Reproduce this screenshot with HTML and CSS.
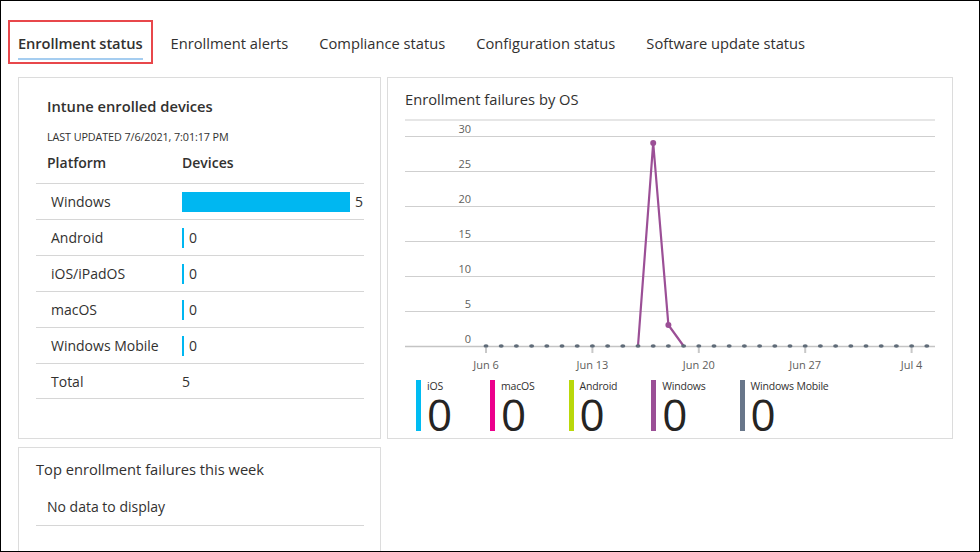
FILE: index.html
```html
<!DOCTYPE html>
<html>
<head>
<meta charset="utf-8">
<link rel="stylesheet" href="styles.css">
</head>
<body>
<div class="frame">
  <nav class="tabs">
    <div class="tab-highlight"><span class="tab active">Enrollment status</span></div>
    <span class="tab">Enrollment alerts</span>
    <span class="tab">Compliance status</span>
    <span class="tab">Configuration status</span>
    <span class="tab">Software update status</span>
  </nav>
  <div class="content">
    <div class="left-col">
      <section class="card devices-card">
        <h2 class="card-title">Intune enrolled devices</h2>
        <div class="updated">LAST UPDATED 7/6/2021, 7:01:17 PM</div>
        <div class="dev-table">
          <div class="dev-head"><span>Platform</span><span>Devices</span></div>
          <div class="dev-row"><span>Windows</span><span class="val"><i class="bar" style="width:168px"></i>5</span></div>
          <div class="dev-row"><span>Android</span><span class="val"><i class="bar zero"></i>0</span></div>
          <div class="dev-row"><span>iOS/iPadOS</span><span class="val"><i class="bar zero"></i>0</span></div>
          <div class="dev-row"><span>macOS</span><span class="val"><i class="bar zero"></i>0</span></div>
          <div class="dev-row"><span>Windows Mobile</span><span class="val"><i class="bar zero"></i>0</span></div>
          <div class="dev-row"><span>Total</span><span class="val">5</span></div>
        </div>
      </section>
      <section class="card failures-card">
        <h2 class="card-title light">Top enrollment failures this week</h2>
        <div class="nodata">No data to display</div>
      </section>
    </div>
    <section class="card chart-card">
      <h2 class="card-title light chart-title">Enrollment failures by OS</h2>
      <svg class="chart" width="530" height="260" viewBox="0 0 530 260">
        <line x1="0" y1="5" x2="530" y2="5" stroke="#e6e6e6" stroke-width="2"/>
        <g stroke="#cfcfcf" stroke-width="1">
          <line x1="0" y1="21.5" x2="530" y2="21.5"/>
          <line x1="0" y1="56.5" x2="530" y2="56.5"/>
          <line x1="0" y1="91.5" x2="530" y2="91.5"/>
          <line x1="0" y1="126.5" x2="530" y2="126.5"/>
          <line x1="0" y1="161.5" x2="530" y2="161.5"/>
          <line x1="0" y1="196.5" x2="530" y2="196.5"/>
          <line x1="0" y1="231.5" x2="530" y2="231.5" stroke="#c4c4c4" stroke-width="1.5"/>
        </g>
        <g class="ylab" text-anchor="end">
          <text x="66" y="18">30</text>
          <text x="66" y="53">25</text>
          <text x="66" y="88">20</text>
          <text x="66" y="123">15</text>
          <text x="66" y="158">10</text>
          <text x="66" y="193">5</text>
          <text x="66" y="228">0</text>
        </g>
        <g stroke="#c8c8c8" stroke-width="2">
          <line x1="81" y1="233" x2="81" y2="238"/>
          <line x1="187.4" y1="233" x2="187.4" y2="238"/>
          <line x1="293.8" y1="233" x2="293.8" y2="238"/>
          <line x1="400.2" y1="233" x2="400.2" y2="238"/>
          <line x1="506.6" y1="233" x2="506.6" y2="238"/>
        </g>
        <g class="xlab" text-anchor="middle">
          <text x="81" y="254">Jun 6</text>
          <text x="187.4" y="254">Jun 13</text>
          <text x="293.8" y="254">Jun 20</text>
          <text x="400.2" y="254">Jun 27</text>
          <text x="506.6" y="254">Jul 4</text>
        </g>
        <polyline points="233,231 248.2,28 263.4,210 278.6,231" fill="none" stroke="#9b4f96" stroke-width="2.2" stroke-linejoin="round"/>
        <circle cx="248.2" cy="28" r="3" fill="#9b4f96"/>
        <circle cx="263.4" cy="210" r="3" fill="#9b4f96"/>
        <g fill="#5f6b78">
          <ellipse cx="81" cy="231" rx="2.5" ry="1.8"/><ellipse cx="96.2" cy="231" rx="2.5" ry="1.8"/><ellipse cx="111.4" cy="231" rx="2.5" ry="1.8"/><ellipse cx="126.6" cy="231" rx="2.5" ry="1.8"/><ellipse cx="141.8" cy="231" rx="2.5" ry="1.8"/><ellipse cx="157" cy="231" rx="2.5" ry="1.8"/><ellipse cx="172.2" cy="231" rx="2.5" ry="1.8"/><ellipse cx="187.4" cy="231" rx="2.5" ry="1.8"/><ellipse cx="202.6" cy="231" rx="2.5" ry="1.8"/><ellipse cx="217.8" cy="231" rx="2.5" ry="1.8"/><ellipse cx="233" cy="231" rx="2.5" ry="1.8"/><ellipse cx="248.2" cy="231" rx="2.5" ry="1.8"/><ellipse cx="263.4" cy="231" rx="2.5" ry="1.8"/><ellipse cx="278.6" cy="231" rx="2.5" ry="1.8"/><ellipse cx="293.8" cy="231" rx="2.5" ry="1.8"/><ellipse cx="309" cy="231" rx="2.5" ry="1.8"/><ellipse cx="324.2" cy="231" rx="2.5" ry="1.8"/><ellipse cx="339.4" cy="231" rx="2.5" ry="1.8"/><ellipse cx="354.6" cy="231" rx="2.5" ry="1.8"/><ellipse cx="369.8" cy="231" rx="2.5" ry="1.8"/><ellipse cx="385" cy="231" rx="2.5" ry="1.8"/><ellipse cx="400.2" cy="231" rx="2.5" ry="1.8"/><ellipse cx="415.4" cy="231" rx="2.5" ry="1.8"/><ellipse cx="430.6" cy="231" rx="2.5" ry="1.8"/><ellipse cx="445.8" cy="231" rx="2.5" ry="1.8"/><ellipse cx="461" cy="231" rx="2.5" ry="1.8"/><ellipse cx="476.2" cy="231" rx="2.5" ry="1.8"/><ellipse cx="491.4" cy="231" rx="2.5" ry="1.8"/><ellipse cx="506.6" cy="231" rx="2.5" ry="1.8"/><ellipse cx="521.8" cy="231" rx="2.5" ry="1.8"/>
        </g>
      </svg>
      <div class="legend">
        <div class="lg lg-ios"><span class="lg-label">iOS</span><span class="lg-num">0</span></div>
        <div class="lg lg-mac"><span class="lg-label">macOS</span><span class="lg-num">0</span></div>
        <div class="lg lg-android"><span class="lg-label">Android</span><span class="lg-num">0</span></div>
        <div class="lg lg-win"><span class="lg-label">Windows</span><span class="lg-num">0</span></div>
        <div class="lg lg-wm"><span class="lg-label">Windows Mobile</span><span class="lg-num">0</span></div>
      </div>
    </section>
  </div>
</div>
</body>
</html>
```
FILE: styles.css
```css
* { box-sizing: border-box; }
html, body { margin: 0; padding: 0; background: #fff; }
body {
  font-family: "Open Sans", "Noto Sans", sans-serif;
  color: #323130;
}
.frame {
  width: 980px;
  height: 552px;
  border: 1px solid #000;
  overflow: hidden;
}
.tabs {
  display: flex;
  align-items: flex-start;
  margin: 19px 0 0 7px;
  height: 44px;
  font-size: 14.7px;
}
.tab-highlight {
  border: 2px solid #e8474b;
  height: 44px;
  padding: 0 8px;
  margin-right: 18px;
}
.tab {
  display: inline-block;
  margin-top: 13px;
  margin-right: 31px;
  white-space: nowrap;
  line-height: 20px;
}
.tab.active {
  margin-top: 11px;
  margin-right: 0;
  font-weight: 600;
  letter-spacing: -0.1px;
  padding-bottom: 5px;
  border-bottom: 2px solid #a5cdf0;
}
.content {
  display: flex;
  gap: 6px;
  margin: 13px 0 0 17px;
  align-items: flex-start;
}
.left-col {
  display: flex;
  flex-direction: column;
  gap: 8px;
  width: 363px;
}
.card {
  border: 1px solid #dcdcdc;
  background: #fff;
}
.card-title {
  margin: 0;
  font-size: 14.7px;
  font-weight: 600;
  line-height: 20px;
}
.card-title.light { font-weight: 400; }
.devices-card {
  height: 362px;
  padding: 18px 16px 0 17px;
}
.devices-card .card-title { padding-left: 11px; }
.updated {
  font-size: 10.8px;
  padding-left: 11px;
  margin-top: 14px;
  line-height: 13px;
  letter-spacing: -0.1px;
}
.dev-table { margin-top: 10px; font-size: 14px; }
.dev-head {
  display: grid;
  grid-template-columns: 135px 1fr;
  padding-left: 11px;
  height: 31px;
  font-weight: 600;
  line-height: 20px;
  border-bottom: 1px solid #d6d6d6;
}
.dev-row {
  display: grid;
  grid-template-columns: 131px 1fr;
  padding-left: 15px;
  height: 36px;
  align-items: center;
  border-bottom: 1px solid #d6d6d6;
}
.dev-row:last-child { height: 35px; }
.val { display: flex; align-items: center; }
.bar {
  display: inline-block;
  height: 20px;
  background: #00b7f1;
  margin-right: 5px;
}
.bar.zero { width: 2px; margin-right: 5px; }
.failures-card {
  height: 120px;
  padding: 11px 16px 0 17px;
}
.nodata {
  font-size: 14px;
  margin-top: 18px;
  padding-left: 11px;
  padding-bottom: 8px;
  line-height: 20px;
  border-bottom: 1px solid #d6d6d6;
}
.chart-card {
  width: 566px;
  height: 362px;
  padding: 11px 0 0 17px;
}
.chart { display: block; margin-top: 6px; }
.ylab text, .xlab text {
  font-family: "Open Sans", sans-serif;
  font-size: 11px;
  fill: #605e5c;
}
.legend {
  display: flex;
  margin: 5px 0 0 11px;
}
.lg {
  height: 51px;
  min-width: 40px;
  border-left: 5px solid;
  padding-left: 6px;
  display: flex;
  flex-direction: column;
  margin-right: 34px;
}
.lg-ios { border-color: #00bcf2; }
.lg-mac { border-color: #ec008c; }
.lg-android { border-color: #bad80a; }
.lg-win { border-color: #9b4f96; }
.lg-wm { border-color: #68768a; }
.lg-label {
  font-size: 10.5px;
  line-height: 12px;
  letter-spacing: -0.2px;
}
.lg-num {
  font-size: 44px;
  line-height: 36px;
  margin-top: 4px;
  color: #252423;
  letter-spacing: -0.5px;
}
```
